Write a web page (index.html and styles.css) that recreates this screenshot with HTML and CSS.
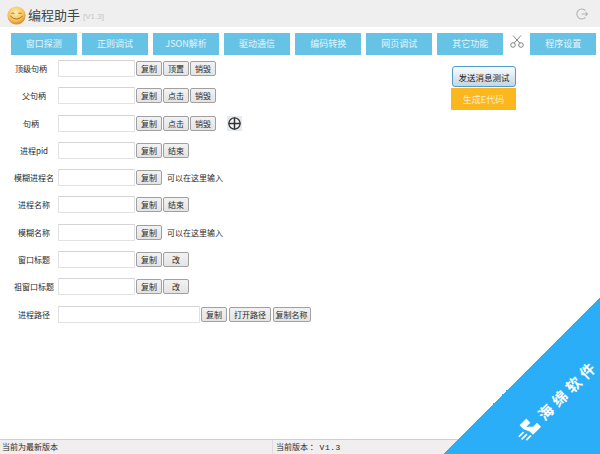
FILE: index.html
```html
<!DOCTYPE html>
<html lang="zh-CN">
<head>
    <meta charset="UTF-8">
    <link rel="stylesheet" href="styles.css">
</head>
<body>
    <div class="window">
        <div class="titlebar">
            <svg class="logo" viewBox="0 0 20 20" width="19" height="19">
                <defs>
                    <radialGradient id="face" cx="45%" cy="35%" r="65%">
                        <stop offset="0" stop-color="#feeeb0"/>
                        <stop offset="0.65" stop-color="#f8c25c"/>
                        <stop offset="1" stop-color="#d98a24"/>
                    </radialGradient>
                </defs>
                <circle cx="10" cy="10" r="9.6" fill="url(#face)"/>
                <path d="M4.5 8q1.7-1.4 3.4 0M12 8q1.7-1.4 3.4 0" fill="none" stroke="#9a6420" stroke-width="0.9"/>
                <path d="M3.5 10.5q6.5 6.5 13 0" fill="none" stroke="#a86c20" stroke-width="1"/>
            </svg>
            <span class="app-name">编程助手</span>
            <span class="app-version">[V1.3]</span>
            <svg class="exit" viewBox="0 0 12 12" width="12" height="12">
                <path d="M9.5 2.6A5 5 0 1 0 9.5 9.4" fill="none" stroke="#b4b4b4" stroke-width="1.1"/>
                <path d="M5.5 6H11.5M9.6 4.2 11.5 6 9.6 7.8" fill="none" stroke="#b4b4b4" stroke-width="1.1"/>
            </svg>
        </div>

        <div class="tabs">
            <a class="tab" href="#">窗口探测</a>
            <a class="tab" href="#">正则调试</a>
            <a class="tab" href="#">JSON解析</a>
            <a class="tab" href="#">驱动通信</a>
            <a class="tab" href="#">编码转换</a>
            <a class="tab" href="#">网页调试</a>
            <a class="tab" href="#">其它功能</a>
            <svg class="scissors" viewBox="0 0 14 13" width="14" height="13">
                <g fill="none" stroke="#666" stroke-width="0.8">
                    <circle cx="3" cy="10" r="2.3"/>
                    <circle cx="11" cy="10" r="2.3"/>
                    <path d="M4.3 8 11 0.5M9.7 8 3 0.5"/>
                </g>
            </svg>
            <a class="tab" href="#">程序设置</a>
        </div>

        <div class="main">
            <div class="form">
                <div class="row">
                    <label class="label label-left">顶级句柄</label>
                    <input class="field" type="text">
                    <button class="btn">复制</button>
                    <button class="btn">顶置</button>
                    <button class="btn">销毁</button>
                </div>
                <div class="row">
                    <label class="label">父句柄</label>
                    <input class="field" type="text">
                    <button class="btn">复制</button>
                    <button class="btn">点击</button>
                    <button class="btn">销毁</button>
                </div>
                <div class="row">
                    <label class="label label-left">句柄</label>
                    <input class="field" type="text">
                    <button class="btn">复制</button>
                    <button class="btn">点击</button>
                    <button class="btn">销毁</button>
                    <svg class="target" viewBox="0 0 15 15" width="15" height="15">
                        <rect width="15" height="15" fill="#e6ebf2"/>
                        <circle cx="7.5" cy="7.5" r="5.6" fill="#f4f4f4" stroke="#333" stroke-width="1.3"/>
                        <path d="M7.5 1.5V13.5M1.5 7.5H13.5" stroke="#333" stroke-width="1.5"/>
                    </svg>
                </div>
                <div class="row">
                    <label class="label">进程pid</label>
                    <input class="field" type="text">
                    <button class="btn">复制</button>
                    <button class="btn">结束</button>
                </div>
                <div class="row">
                    <label class="label">模糊进程名</label>
                    <input class="field" type="text">
                    <button class="btn">复制</button>
                    <span class="hint">可以在这里输入</span>
                </div>
                <div class="row">
                    <label class="label">进程名称</label>
                    <input class="field" type="text">
                    <button class="btn">复制</button>
                    <button class="btn">结束</button>
                </div>
                <div class="row">
                    <label class="label">模糊名称</label>
                    <input class="field" type="text">
                    <button class="btn">复制</button>
                    <span class="hint">可以在这里输入</span>
                </div>
                <div class="row">
                    <label class="label">窗口标题</label>
                    <input class="field" type="text">
                    <button class="btn">复制</button>
                    <button class="btn">改</button>
                </div>
                <div class="row">
                    <label class="label">祖窗口标题</label>
                    <input class="field" type="text">
                    <button class="btn">复制</button>
                    <button class="btn">改</button>
                </div>
                <div class="row">
                    <label class="label">进程路径</label>
                    <input class="field field-wide" type="text">
                    <button class="btn">复制</button>
                    <button class="btn btn-open">打开路径</button>
                    <button class="btn btn-name">复制名称</button>
                </div>
            </div>
            <div class="actions">
                <button class="send">发送消息测试</button>
                <button class="generate">生成E代码</button>
            </div>
        </div>

        <div class="statusbar">
            <div class="status-left">当前为最新版本</div>
            <div class="status-right">当前版本 ： <span class="status-version">V1.3</span></div>
        </div>

        <div class="ribbon">
            <div class="ribbon-mark">
                <svg viewBox="0 0 25 20" width="24" height="19">
                    <path d="M10 1H20V7H14L19 12H25V18H13V13L10 7Z" fill="#fff"/>
                    <path d="M1 9H8M1 13H9M4 17H11" fill="none" stroke="#fff" stroke-width="1.8"/>
                </svg>
                <span class="ribbon-text">海绵软件</span>
            </div>
        </div>
    </div>
</body>
</html>
```

FILE: styles.css
```css
:root {
    --tab: #67c3e6;
    --tab-text: #e4f4fa;
    --bar: #efefef;
    --status: #f0eeee;
    --text: #2a2a2a;
    --ribbon: #2aaef8;
}

* {
    margin: 0;
    padding: 0;
    box-sizing: border-box;
    font-family: "Noto Sans CJK SC", "Liberation Sans", sans-serif;
}

html, body {
    width: 600px;
    height: 454px;
    overflow: hidden;
    background: #fff;
}

.window {
    position: relative;
    width: 600px;
    height: 454px;
    display: flex;
    flex-direction: column;
    overflow: hidden;
    color: var(--text);
}

.titlebar {
    display: flex;
    align-items: center;
    height: 27px;
    flex: none;
    padding: 0 12px 0 6.5px;
    background: var(--bar);
}

.logo {
    margin-top: 4px;
}

.app-name {
    margin-left: 2.5px;
    font-size: 13px;
    line-height: 27px;
    margin-top: 2px;
    color: #444;
}

.app-version {
    margin-left: 3px;
    margin-top: 6px;
    font-size: 8px;
    color: #c4c4c4;
    font-family: "Liberation Sans", sans-serif;
}

.exit {
    margin-left: auto;
    margin-top: 1px;
}

.tabs {
    display: flex;
    align-items: flex-start;
    gap: 5.4px;
    flex: none;
    height: 22px;
    margin-top: 6px;
    padding-left: 11px;
}

.tab {
    display: block;
    width: 65.7px;
    height: 22px;
    line-height: 22px;
    text-align: center;
    font-size: 9px;
    color: var(--tab-text);
    text-decoration: none;
    background: var(--tab);
}

.scissors {
    margin: 2px 1.2px 0;
}

.main {
    flex: 1;
    display: flex;
    position: relative;
    padding-top: 5px;
}

.form {
    display: flex;
    flex-direction: column;
    gap: 10.3px;
}

.row {
    display: flex;
    align-items: center;
    height: 17px;
    font-size: 8px;
}

.label {
    width: 58px;
    padding-left: 10px;
    text-align: center;
    font-size: 8px;
    white-space: nowrap;
}

.label-left {
    padding-left: 4px;
}

.field {
    width: 77px;
    height: 17px;
    background: #fff;
    border: 1px solid #e2e2e2;
    border-top-color: #d4d4d4;
    border-radius: 1px;
}

.field-wide {
    width: 142px;
}

.btn {
    width: 26px;
    height: 15px;
    margin-left: 1px;
    font-size: 8px;
    color: #2a2a2a;
    background: linear-gradient(#f2f2f2, #e4e4e4);
    border: 1px solid #a0a0a0;
    border-radius: 2px;
}

.btn-open {
    width: 42px;
    margin-left: 2px;
}

.btn-name {
    width: 38px;
    margin-left: 1.5px;
}

.target {
    margin-left: 11px;
}

.hint {
    margin-left: 5px;
    font-size: 8px;
}

.actions {
    position: absolute;
    top: 11px;
    left: 451px;
    display: flex;
    flex-direction: column;
    align-items: flex-end;
    gap: 1px;
}

.send {
    width: 64px;
    height: 21px;
    font-size: 8.5px;
    color: #222;
    background: linear-gradient(#fafcfd, #c5d5e3);
    border: 1.5px solid #4f9cc6;
    border-radius: 3px;
}

.generate {
    width: 65px;
    height: 22px;
    font-size: 9px;
    color: #fbeccb;
    background: #fdb71e;
    border: none;
}

.statusbar {
    display: flex;
    flex: none;
    height: 15px;
    font-size: 8px;
    line-height: 14px;
    background: var(--status);
    border-top: 1px solid #d0d0d0;
}

.status-left {
    width: 273px;
    padding-left: 2px;
    border-right: 1px solid #ddd;
}

.status-right {
    padding-left: 3px;
}

.status-version {
    font-family: "Liberation Mono", monospace;
    letter-spacing: 0.5px;
}

/* corner ribbon over the window */
.ribbon {
    position: absolute;
    right: 0;
    bottom: 0;
    width: 157px;
    height: 157px;
    background: linear-gradient(to bottom right, transparent 50%, var(--ribbon) 50%);
}

.ribbon-mark {
    position: absolute;
    left: 114px;
    top: 103px;
    display: flex;
    align-items: center;
    gap: 6px;
    transform: translate(-50%, -50%) rotate(-45deg);
    white-space: nowrap;
}

.ribbon-text {
    font-size: 15px;
    font-weight: 700;
    letter-spacing: 4.5px;
    color: #fff;
}
```
